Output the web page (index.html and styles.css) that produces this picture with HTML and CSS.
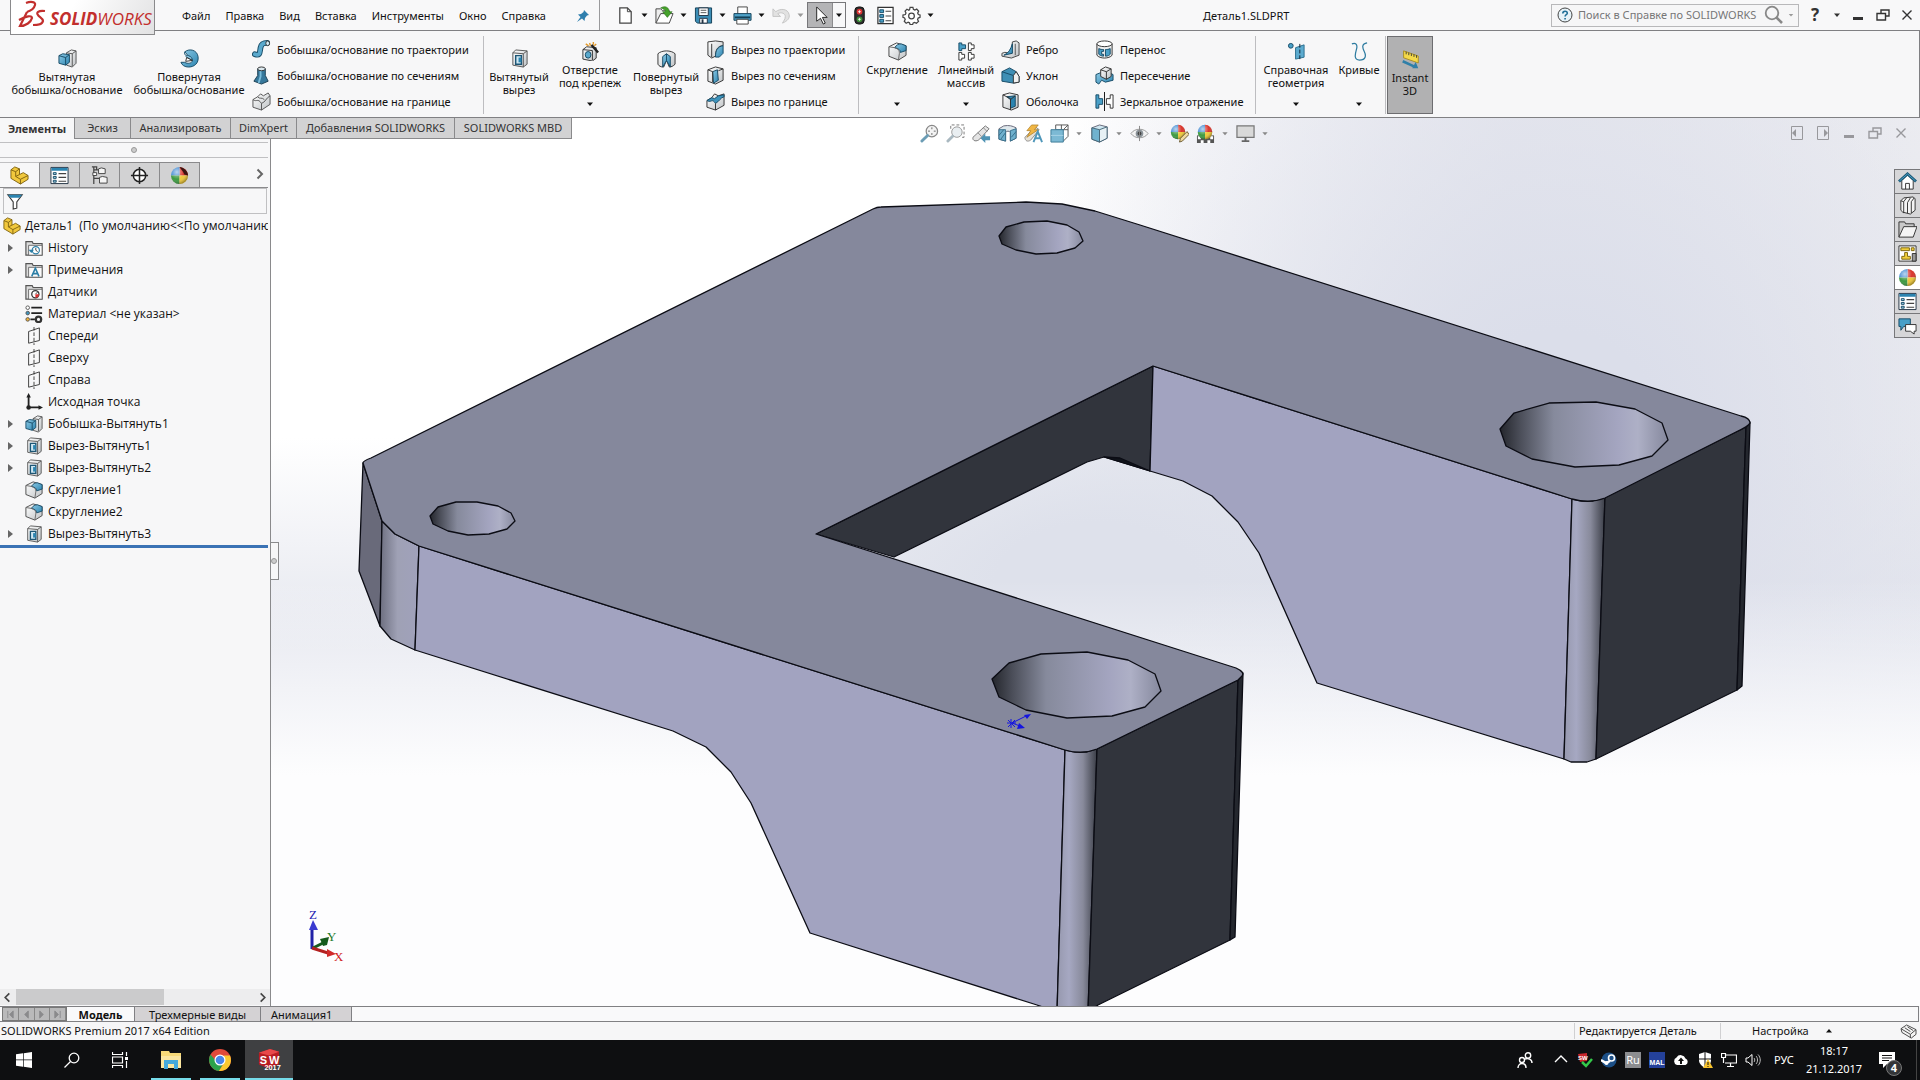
FILE: index.html
```html
<!DOCTYPE html>
<html lang="ru">
<head>
<meta charset="utf-8">
<title>Деталь1.SLDPRT</title>
<link rel="stylesheet" href="styles.css">
</head>
<body>
<svg class="sprite" aria-hidden="true">
  <defs>
    <linearGradient id="blue" x1="0" y1="0" x2="1" y2="1"><stop offset="0" stop-color="#8fcbe6"/><stop offset="1" stop-color="#2b84b0"/></linearGradient>
    <linearGradient id="grey" x1="0" y1="0" x2="1" y2="1"><stop offset="0" stop-color="#fff"/><stop offset="1" stop-color="#bfc3c6"/></linearGradient>
    <radialGradient id="shine" cx=".35" cy=".3" r=".7"><stop offset="0" stop-color="#fff" stop-opacity=".65"/><stop offset=".6" stop-color="#fff" stop-opacity="0"/><stop offset="1" stop-color="#000" stop-opacity=".3"/></radialGradient>
  </defs>
  <symbol id="caret" viewBox="0 0 8 8"><path d="M1 2.500h6L4 6z" fill="currentColor"/></symbol>
  <symbol id="boss" viewBox="0 0 20 20"><path d="M9 4l5-3 5 1v13l-4 4-6-2z" fill="url(#grey)" stroke="#555"/><path d="M15 5v13M15 5l4-3M15 5L9 4" stroke="#555" fill="none"/><path d="M1 7l4-2 7 1v8l-4 3-7-2z" fill="url(#blue)" stroke="#174b66"/><path d="M1 7l7 2 4-3M8 9v8" fill="none" stroke="#174b66"/></symbol>
  <symbol id="revolve" viewBox="0 0 20 20"><path d="M5 3c5-4 13-2 14 5s-4 11-10 11c-4 0-7-2-8-5h4c3 2 8 1 8-2z" fill="url(#blue)" stroke="#174b66"/><path d="M5 3c-1 3 1 4 4 4 3 1 4 3 4 5L6 8" fill="#8fcbe6" stroke="#174b66"/><path d="M7 9l6 3-7 1z" fill="#fff" stroke="#333"/></symbol>
  <symbol id="sweep" viewBox="0 0 20 20"><path d="M3 15c6 2 5-2 6-7 1-5 4-5 7-5" fill="none" stroke="#174b66" stroke-width="6" stroke-linecap="round"/><path d="M3 15c6 2 5-2 6-7 1-5 4-5 7-5" fill="none" stroke="#5aa9cd" stroke-width="4" stroke-linecap="round"/><ellipse cx="16.500" cy="3.500" rx="2" ry="2.500" fill="#d5ecf6" stroke="#333"/></symbol>
  <symbol id="loft" viewBox="0 0 20 20"><path d="M6 3v7l-4 6 8 3 7-3-3-6V3z" fill="#37789b" stroke="#1c3f52"/><path d="M9 4v7l-2 7" stroke="#79bbd9" stroke-width="2" fill="none"/><ellipse cx="10" cy="3" rx="4" ry="2" fill="#dbe8ee" stroke="#333"/></symbol>
  <symbol id="boundary" viewBox="0 0 20 20"><path d="M1 8l5-3 3-3 3 2 5-3 2 3v9l-9 6-9-3z" fill="url(#grey)" stroke="#555"/><path d="M1 8c4 3 5-2 9 4v7M10 12c4-1 5-6 9-8M6 5c2 3 4 0 7 3" fill="none" stroke="#555"/></symbol>
  <symbol id="cut" viewBox="0 0 20 20"><path d="M3 4l3-3 12 1v14l-4 3-11-2z" fill="url(#grey)" stroke="#555"/><path d="M3 4l11 1v14M14 5l4-3" fill="none" stroke="#555"/><path d="M6 7h6v9H6z" fill="#cfe7f2" stroke="#1d5675" stroke-width="1.500"/><path d="M9 9h3v5H9z" fill="#2b84b0"/></symbol>
  <symbol id="wizard" viewBox="0 0 20 20"><path d="M2 8l4-3 10 1v11l-4 3-10-2z" fill="url(#grey)" stroke="#333"/><path d="M2 8l10 1v10" fill="none" stroke="#333"/><ellipse cx="7.500" cy="13.500" rx="3" ry="3.500" fill="#5aa9cd" stroke="#174b66"/><path d="M11 3l7 8" stroke="#222" stroke-width="2.500"/><path d="M9 1l1 3M13 0v3M5 2l3 2M16 2l-2 2" stroke="#e29a2b" stroke-width="1.500"/></symbol>
  <symbol id="revcut" viewBox="0 0 20 20"><path d="M1 5c4-4 14-4 18 0v11c-2 2-4 3-6 3l-3-7-3 7c-3 0-5-1-6-3z" fill="url(#grey)" stroke="#333"/><path d="M10 5l4 3v11l-4-7-4 7V8z" fill="url(#blue)" stroke="#174b66"/><path d="M10 5v7" stroke="#174b66"/></symbol>
  <symbol id="sweepcut" viewBox="0 0 20 20"><path d="M2 2l8-1 8 1v4c-6 0-8 5-8 11l-4 2-4-3z" fill="url(#grey)" stroke="#333"/><path d="M18 6v8l-4 4h-4c0-7 2-11 8-12z" fill="url(#blue)" stroke="#174b66"/><path d="M6 4v14" stroke="#333"/></symbol>
  <symbol id="loftcut" viewBox="0 0 20 20"><path d="M2 4l8-3 8 2v12l-8 4-8-3z" fill="url(#grey)" stroke="#333"/><path d="M7 6l5-2 1 11-5 3z" fill="url(#blue)" stroke="#174b66"/><path d="M2 4l5 2v11M13 5l5-2" fill="none" stroke="#333"/></symbol>
  <symbol id="boundcut" viewBox="0 0 20 20"><path d="M1 9l5-3 3-4 4 2 6-2v12l-9 5-9-3z" fill="url(#grey)" stroke="#333"/><path d="M1 9c5 3 5-3 9 3 4-2 5-6 9-7V3l-6 1-4 3-3-1z" fill="#3d93bc" stroke="#174b66"/><path d="M10 12v7" stroke="#333"/></symbol>
  <symbol id="fillet" viewBox="0 0 20 20"><path d="M1 5l8-4 10 3v10l-8 5-10-4z" fill="url(#grey)" stroke="#444"/><path d="M7 6c2-3 4-4 7-4l5 2v5l-6 2c0-3-2-4-6-5z" fill="url(#blue)" stroke="#174b66"/><path d="M1 5l6 1c4 1 5 3 5 6l-1 7" fill="none" stroke="#666"/></symbol>
  <symbol id="pattern" viewBox="0 0 20 20"><path d="M2 1h3v2h4v4H5v2H2z" fill="#49a0c8" stroke="#174b66"/><path d="M12 1h3v2h3v4h-3v2h-3zM2 11h3v2h3v4H5v2H2zM12 11h3v2h3v4h-3v2h-3z" fill="#fff" stroke="#333"/></symbol>
  <symbol id="rib" viewBox="0 0 20 20"><path d="M12 2l4-1 3 2v13l-8 3-10-2v-3l3-1 7 1z" fill="url(#grey)" stroke="#444"/><path d="M12 4v10l-9 2c5-2 7-6 9-12z" fill="url(#blue)" stroke="#174b66"/><path d="M15 4v12" stroke="#555"/></symbol>
  <symbol id="draft" viewBox="0 0 20 20"><path d="M1 6l8-4 7 4 3 5v6l-6 1-12-2z" fill="#3f8fb5" stroke="#174b66"/><path d="M13 18V10l3-4 3 5v6z" fill="#f1f1f1" stroke="#333"/><path d="M1 6l12 4" stroke="#174b66"/></symbol>
  <symbol id="shell" viewBox="0 0 20 20"><path d="M2 3l7-2 9 2v13l-7 3-9-3z" fill="url(#grey)" stroke="#333"/><path d="M6 5l9-1v11l-5 2V8z" fill="#2b84b0" stroke="#174b66"/><path d="M2 3l8 4v12M15 4L10 8" stroke="#333" fill="none"/></symbol>
  <symbol id="wrap" viewBox="0 0 20 20"><path d="M2 4v12c3 4 13 4 16 0V4" fill="#eee" stroke="#333"/><ellipse cx="10" cy="4" rx="8" ry="3" fill="#fff" stroke="#333"/><path d="M4 9c2 1 3 1 5 1v2H7v3h2v2c-2 0-4-1-5-2zM16 9c-2 1-3 1-5 1v7c3 0 4-1 5-2z" fill="#49a0c8" stroke="#174b66"/></symbol>
  <symbol id="intersect" viewBox="0 0 20 20"><path d="M1 9l5-2 3 4 8-3 2 1v6l-8 2-4-2-3 4-3-2z" fill="url(#blue)" stroke="#174b66"/><path d="M6 4l5-3 6 2v8l-5 3-6-3z" fill="url(#grey)" stroke="#333"/><path d="M6 4l6 2 5-3M12 6v8" fill="none" stroke="#333"/></symbol>
  <symbol id="mirror" viewBox="0 0 20 20"><path d="M1 3h3v4h4v6H4v4H1z" fill="#49a0c8" stroke="#174b66"/><path d="M10 0v20" stroke="#111"/><path d="M19 3h-3v4h-4v6h4v4h3z" fill="#fff" stroke="#333"/></symbol>
  <symbol id="refgeo" viewBox="0 0 20 20"><circle cx="4" cy="4" r="2.500" fill="#49a0c8" stroke="#174b66"/><path d="M9 6l9-3v13l-9 2z" fill="#5cabcf" stroke="#2b6f8f"/><path d="M13.500 2v18" stroke="#123" stroke-dasharray="4 2"/></symbol>
  <symbol id="curves" viewBox="0 0 20 20"><path d="M2 2c4-2 6 1 5 5s-4 12 3 12 7-5 5-9-3-8 3-9" fill="none" stroke="#2d7ba0" stroke-width="1.300"/></symbol>
  <symbol id="instant" viewBox="0 0 20 22"><path d="M2 1l17 6v8L2 9z" fill="#f4d94a" stroke="#a68a1a"/><path d="M5 2v3M8 3v3M11 4v3M14 5v3M17 6v3" stroke="#333"/><path d="M1 13l13 6" stroke="#2f7fa8" stroke-width="3"/><path d="M12 21l7 0-3-7z" fill="#2f7fa8"/></symbol>

  <symbol id="new" viewBox="0 0 20 20"><path d="M4 2h8l4 4v12H4z" fill="#fff" stroke="#444" stroke-width="1.300"/><path d="M12 2v4h4" fill="none" stroke="#444"/></symbol>
  <symbol id="open" viewBox="0 0 20 20"><path d="M1 18V3h5l2 2h7v3" fill="#eee" stroke="#444"/><path d="M1 18L6 8h13l-4 10z" fill="#fff" stroke="#444"/><path d="M6 2c5-3 9 0 9 4h3l-5 6-5-6h3c0-2-2-3-5-4z" fill="#46a22c" stroke="#2c6d1c" stroke-width=".6"/></symbol>
  <symbol id="save" viewBox="0 0 20 20"><path d="M1.500 2h17v16h-15l-2-2z" fill="#3c8db5" stroke="#123f57"/><path d="M5 2h10v8H5zM6 13h8v5H6z" fill="#fff" stroke="#234"/><path d="M7 4.500h6M7 7h6" stroke="#555"/><path d="M8 14h2v4H8z" fill="#234"/></symbol>
  <symbol id="print" viewBox="0 0 20 20"><path d="M5 8V1h10v7" fill="#fff" stroke="#444"/><path d="M1 8h18v7H1z" fill="#4fa2c8" stroke="#123f57"/><path d="M2 12h16" stroke="#123f57" stroke-width="2"/><path d="M4 14h12v5H4z" fill="#fff" stroke="#444"/></symbol>
  <symbol id="undo" viewBox="0 0 20 20"><path d="M1 3v8h8L6 8c4-2 8 0 8 3s-2 5-3 7c5-2 8-5 7-9C17 3 9 2 4 6z" fill="#e2e2e2" stroke="#c4c4c4"/></symbol>
  <symbol id="pointer" viewBox="0 0 20 20"><path d="M6 1v15l4-3 3 6 2-1-3-6h5z" fill="#fff" stroke="#222"/></symbol>
  <symbol id="traffic" viewBox="0 0 20 20"><rect x="5" y="1" width="10" height="18" rx="4" fill="#2d2d2d" stroke="#111"/><circle cx="10" cy="6" r="3" fill="#d33"/><circle cx="10" cy="14" r="3" fill="#3f8f3a"/><path d="M8.500 6h3M10 4.500v3M8.500 14h3M10 12.500v3" stroke="#fff" stroke-width=".8"/></symbol>
  <symbol id="options" viewBox="0 0 20 20"><path d="M2 1.500h16v17H2z" fill="#fff" stroke="#333" stroke-width="1.300"/><path d="M4 4h4v3H4zM4 9h4v3H4zM4 14h4v3H4z" fill="#49a0c8" stroke="#174b66"/><path d="M10 5.500h6M10 10.500h6M10 15.500h6" stroke="#444" stroke-width="1.200"/></symbol>
  <symbol id="gear" viewBox="0 0 20 20"><path d="M8.500 1.500h3l.5 2 1.500.8 2-1 2 2.200-1 2 .7 1.500 1.800.5v2.500l-2 .7-.6 1.500 1 2-2.200 2-2-1-1.400.6-.6 1.700h-2.700l-.6-1.800-1.500-.6-2 1-2-2 1-2-.7-1.500-1.700-.6V9.500L3.500 9l.7-1.600-1-2 2-2 2 1 .8-.6z" fill="#fff" stroke="#444" stroke-width="1.300"/><circle cx="10" cy="10.500" r="3" fill="#fff" stroke="#444" stroke-width="1.300"/></symbol>
  <symbol id="pin" viewBox="0 0 14 14"><path d="M8 1l5 5-2 .5-2 2.500-.5 3L6 9.500 1 13l3.500-5L2 5.500 5 5l2.500-2z" fill="#2f7fae"/></symbol>

  <symbol id="zoomfit" viewBox="0 0 20 20"><circle cx="12.500" cy="7.500" r="6" fill="#f3f3f3" stroke="#888" stroke-width="1.300"/><path d="M12.500 3.500v8M8.500 7.500h8" stroke="#666" stroke-dasharray="2 4 2"/><path d="M8 12l-6 6" stroke="#6c9db5" stroke-width="3" stroke-linecap="round"/></symbol>
  <symbol id="zoomarea" viewBox="0 0 20 20"><path d="M5 5V1h14v13h-3" fill="none" stroke="#777" stroke-dasharray="3 2"/><circle cx="11.500" cy="8.500" r="5.500" fill="#e9eef1" stroke="#999"/><path d="M7 13l-5 5" stroke="#a9b8c0" stroke-width="3" stroke-linecap="round"/></symbol>
  <symbol id="prevview" viewBox="0 0 20 20"><path d="M1 14L14 2l4 3-10 11c-3 3-8 2-7-2z" fill="#e4e4e4" stroke="#777"/><path d="M12 4l4 4M6 9l4 4" stroke="#8a8a8a"/><path d="M9 15l5-5v3h5v4h-5v3z" fill="#4f93b4"/></symbol>
  <symbol id="section" viewBox="0 0 20 20"><path d="M1 5l5-3c6-1 9 0 13 2v11l-6 3V9c-1-2-4-2-5 0v9l-7-2z" fill="#dfe8ec" stroke="#667"/><path d="M1 6h7v12l-7-2zM13 7l6-2v10l-6 3z" fill="#6fb0cd" stroke="#36708c"/><path d="M1 12l5-6M3 16l5-7M14 14l5-6" stroke="#36708c"/></symbol>
  <symbol id="dynview" viewBox="0 0 20 20"><path d="M1 14L12 3l4 3-9 11c-3 2-6 1-6-3z" fill="#e8e2d6" stroke="#8a8a8a"/><path d="M8 1h7l-4 5h4L3 14l4-7H3z" fill="#f0b645" stroke="#a9781e" stroke-width=".7"/><path d="M10 19l4.500-11L19 19M12 15h5" fill="none" stroke="#4f97ba" stroke-width="2"/></symbol>
  <symbol id="orient" viewBox="0 0 20 20"><path d="M6 1h13v12l-5 5M6 1v5M12 1v12M6 6h13M19 1l-5 5" fill="none" stroke="#555"/><path d="M1 6h13v13H1z" fill="#7cb9d4" stroke="#3c7a97"/><path d="M1 12h13" stroke="#a8d4e6"/></symbol>
  <symbol id="display" viewBox="0 0 20 20"><path d="M2 4l8-3 8 2v12l-8 4-8-3z" fill="#cfe7f1" stroke="#667"/><path d="M2 4l8 2v13l-8-3z" fill="#70b2ce" stroke="#467"/><path d="M10 6l8-3v12l-8 4z" fill="#e7f1f5" stroke="#467"/></symbol>
  <symbol id="eye" viewBox="0 0 20 20"><path d="M1 10c4-6 14-6 18 0-4 6-14 6-18 0z" fill="#f3f3f3" stroke="#999"/><circle cx="10" cy="10" r="4" fill="#8a9298"/><circle cx="10" cy="10" r="2" fill="#444"/><path d="M10 2v16" stroke="#888"/></symbol>
  <symbol id="ball" viewBox="0 0 20 20"><path d="M10 10V1a9 9 0 0 1 9 9z" fill="#d9342b"/><path d="M10 10V1a9 9 0 0 0-9 9z" fill="#3a86d1"/><path d="M10 10H1a9 9 0 0 0 9 9z" fill="#3d9a42"/><path d="M10 10v9a9 9 0 0 0 9-9z" fill="#f0c93a"/><circle cx="10" cy="10" r="9" fill="url(#shine)"/></symbol>
  <symbol id="ballcut" viewBox="0 0 20 20"><use href="#ball"/><path d="M10 1c4 0 9 4 9 9l-4-1c-1-3-3-5-5-8z" fill="#3b1512"/></symbol>
  <symbol id="appear" viewBox="0 0 20 20"><use href="#ball" width="17" height="17"/><path d="M10 19l1-4 7-7 2 3-7 7z" fill="#f0d9a0" stroke="#6a5a30"/></symbol>
  <symbol id="sceneic" viewBox="0 0 20 20"><path d="M1 12h18v8H1z" fill="#555"/><path d="M2 13h3v3H2zM5 17h3v3H5zM12 17h3v3h-3zM15 13h3v3h-3z" fill="#fff"/><use href="#ball" x="1" width="17" height="17"/></symbol>
  <symbol id="monitor" viewBox="0 0 20 20"><path d="M1 2h18v12H1z" fill="#d9d9d9" stroke="#777" stroke-width="1.300"/><path d="M10 14v4M6 18h8" stroke="#666" stroke-width="2"/></symbol>

  <symbol id="min" viewBox="0 0 14 14"><path d="M2 9h10v3H2z" fill="currentColor"/></symbol>
  <symbol id="restore" viewBox="0 0 14 14"><path d="M5 5V2h8v6H10M1 5.500h8.500V12H1z" fill="none" stroke="currentColor" stroke-width="1.400"/></symbol>
  <symbol id="close" viewBox="0 0 14 14"><path d="M2.500 2.500l9 9M11.500 2.500l-9 9" stroke="currentColor" stroke-width="1.400"/></symbol>
  <symbol id="dockl" viewBox="0 0 14 14"><path d="M1.500.5h11v13h-11z" fill="none" stroke="currentColor"/><path d="M2 7l4-4v8z" fill="currentColor"/></symbol>
  <symbol id="dockr" viewBox="0 0 14 14"><path d="M1.500.5h11v13h-11z" fill="none" stroke="currentColor"/><path d="M12 7L8 3v8z" fill="currentColor"/></symbol>

  <symbol id="home" viewBox="0 0 20 20"><path d="M4 9v9h12V9l-6-6z" fill="#fff" stroke="#333"/><path d="M1 10l9-8 9 8" fill="none" stroke="#1c5875" stroke-width="3"/><path d="M1.500 9.500L10 2l8.500 7.500" fill="none" stroke="#4aa3ca"/><path d="M8 18v-6h4v6" fill="none" stroke="#333"/></symbol>
  <symbol id="library" viewBox="0 0 20 20"><path d="M3 5l3-3 10-1 2 2v12l-5 4-8-2-2-2z" fill="#f4f4f4" stroke="#333"/><path d="M3 5l3 1v12M6 6l3-4M10 7v11M10 7l3-5M14 6v12M14 6l3-4" stroke="#333" fill="none"/></symbol>
  <symbol id="folder" viewBox="0 0 20 20"><path d="M1 18V2h6l1 2h9v3" fill="#c9c9c9" stroke="#333"/><path d="M1 18l5-11h14l-4 11z" fill="#f4f4f4" stroke="#333"/></symbol>
  <symbol id="palette" viewBox="0 0 20 20"><path d="M1 2h18v16H1z" fill="#fff" stroke="#333"/><path d="M3 4h9v3H3zM14 4h3v3h-3zM7 9h3v4h3v3H4v-3h3z" fill="#f2cf3a" stroke="#7b6510"/><path d="M15 10h4v8h-4z" fill="#999" stroke="#333"/></symbol>
  <symbol id="props" viewBox="0 0 20 20"><path d="M1 1.500h18v17H1z" fill="#fff" stroke="#234"/><path d="M1.500 2h17v3h-17z" fill="#2b84b0"/><path d="M3.500 7h3v2h-3zM3.500 11h3v2h-3zM3.500 15h3v2h-3z" fill="#9fd2e8" stroke="#174b66"/><path d="M9 8h8M9 12h8M9 16h8" stroke="#444" stroke-width="1.200"/></symbol>
  <symbol id="forum" viewBox="0 0 20 20"><path d="M1 3h12v8H6l-3 4v-4H1z" fill="#49a0c8" stroke="#174b66"/><path d="M8 9h11v7h-2v3l-4-3H8z" fill="#fff" stroke="#333"/></symbol>

  <symbol id="part" viewBox="0 0 20 20"><path d="M1 4l4-3 5 2v6l4-2 5 3v4l-8 5-10-6z" fill="#f1c83d" stroke="#7f6310"/><path d="M1 4l5 2v5l5 3v5M6 6l4-3M6 11l4-2M11 14l8-4" fill="none" stroke="#7f6310"/></symbol>
  <symbol id="config" viewBox="0 0 20 20"><path d="M4 1v18M4 4h5M4 13h6M2 1h5v3" fill="none" stroke="#444" stroke-width="1.300"/><path d="M9 3l3-1 4 1v5H9zM10 12l3-1 5 1v6h-8z" fill="#f5f5f5" stroke="#444"/><path d="M3 7h4v3H3z" fill="#fff" stroke="#444"/></symbol>
  <symbol id="target" viewBox="0 0 20 20"><circle cx="10" cy="10" r="6.500" fill="#fff" stroke="#222" stroke-width="1.600"/><path d="M10 1v18M1 10h18" stroke="#222" stroke-width="1.600"/></symbol>
  <symbol id="filter" viewBox="0 0 20 20"><path d="M2 3h16l-6 8v7l-4 1v-8z" fill="#fff" stroke="#333" stroke-width="1.200"/><path d="M2 3h16l-3 3.500H5z" fill="#2b84b0"/></symbol>
  <symbol id="fold" viewBox="0 0 20 20"><path d="M1 18V3h7l1 2h10v13z" fill="#dcdcdc" stroke="#555" stroke-width="1.300"/><path d="M4 7h15v11H4z" fill="#fafafa" stroke="#666"/></symbol>
  <symbol id="history" viewBox="0 0 20 20"><use href="#fold"/><circle cx="12" cy="12.500" r="4" fill="#fff" stroke="#2b7ea6" stroke-width="1.300"/><path d="M12 10v2.500l2 1.500" fill="none" stroke="#333"/><path d="M4 12h6l-3 3.500z" fill="#2b7ea6"/></symbol>
  <symbol id="notes" viewBox="0 0 20 20"><use href="#fold"/><path d="M7.500 17L11.500 8l4 9M9 14h5" fill="none" stroke="#2b7ea6" stroke-width="1.800"/></symbol>
  <symbol id="sensor" viewBox="0 0 20 20"><use href="#fold"/><circle cx="11.500" cy="12.500" r="4" fill="#fff" stroke="#333" stroke-width="1.400"/><path d="M11.500 12.500l3-3" stroke="#333"/><path d="M11.500 16.500a4 4 0 0 0 4-4h-4z" fill="#d33"/></symbol>
  <symbol id="material" viewBox="0 0 20 20"><circle cx="3" cy="3" r="2" fill="#fff" stroke="#555"/><circle cx="3" cy="9" r="2" fill="#3d93bc" stroke="#555"/><circle cx="3" cy="16" r="2" fill="#f0b33a" stroke="#555"/><path d="M7 3h12M7 9h12M6 16h5" stroke="#222" stroke-width="2"/><circle cx="15" cy="16" r="3" fill="none" stroke="#333" stroke-width="2.500"/></symbol>
  <symbol id="plane" viewBox="0 0 20 20"><path d="M4 5l12-4v14L4 18z" fill="none" stroke="#333"/><path d="M10 0v20" stroke="#333" stroke-dasharray="4 2"/></symbol>
  <symbol id="origin" viewBox="0 0 20 20"><path d="M4 16V3M4 16h13" stroke="#222" stroke-width="2"/><path d="M4 0l2.500 5h-5zM20 16l-5-2.500v5z" fill="#222"/><circle cx="4" cy="16" r="2.500" fill="#222"/></symbol>
  <symbol id="fly" viewBox="0 0 6 8"><path d="M0 0l5 4-5 4z" fill="#666"/></symbol>

  <linearGradient id="gHole" x1="0" x2="1"><stop offset="0" stop-color="#24262c"/><stop offset=".12" stop-color="#4b4e59"/><stop offset=".32" stop-color="#868a9c"/><stop offset=".7" stop-color="#a4a5c0"/><stop offset=".82" stop-color="#aeb0c6"/><stop offset="1" stop-color="#85889d"/></linearGradient>
  <linearGradient id="gEdge" x1="0" x2="1"><stop offset="0" stop-color="#9698ae"/><stop offset=".3" stop-color="#a6a8c2"/><stop offset=".65" stop-color="#888a9b"/><stop offset="1" stop-color="#3a3d46"/></linearGradient>
  <linearGradient id="gEdgeL" x1="0" x2="1"><stop offset="0" stop-color="#6d6f80"/><stop offset=".45" stop-color="#9fa1b5"/><stop offset="1" stop-color="#a0a1bb"/></linearGradient>
</svg>

<header class="titlebar">
  <div class="logo" aria-label="SOLIDWORKS">
    <svg viewBox="0 0 36 34" aria-hidden="true"><path d="M14 3c5-2 10-1 9 2-1 4-5 6-8 7M15 12L8 26c6 0 11-4 12-8 0-3-6-2-13 2M33 11c-7-1-9 2-7 4 1 2 5 3 5 6-1 4-6 4-10 4" fill="none" stroke="#c22f2d" stroke-width="2.200"/></svg>
    <span><b>SOLID</b>WORKS</span>
  </div>
  <nav class="menu">
    <a href="#">Файл</a><a href="#">Правка</a><a href="#">Вид</a><a href="#">Вставка</a><a href="#">Инструменты</a><a href="#">Окно</a><a href="#">Справка</a>
    <svg class="i14"><use href="#pin"/></svg>
  </nav>
  <div class="quick">
    <button aria-label="Создать"><svg><use href="#new"/></svg></button><svg class="car"><use href="#caret"/></svg>
    <button aria-label="Открыть"><svg><use href="#open"/></svg></button><svg class="car"><use href="#caret"/></svg>
    <button aria-label="Сохранить"><svg><use href="#save"/></svg></button><svg class="car"><use href="#caret"/></svg>
    <button aria-label="Печать"><svg><use href="#print"/></svg></button><svg class="car"><use href="#caret"/></svg>
    <button aria-label="Отменить"><svg><use href="#undo"/></svg></button><svg class="car dim"><use href="#caret"/></svg>
    <div class="select"><button aria-label="Выбрать"><svg><use href="#pointer"/></svg></button><svg class="selcar"><use href="#caret"/></svg></div>
    <button class="wide" aria-label="Перестроить"><svg><use href="#traffic"/></svg></button>
    <button class="wide" aria-label="Свойства"><svg><use href="#options"/></svg></button>
    <button class="wide" aria-label="Параметры"><svg><use href="#gear"/></svg></button><svg class="car near"><use href="#caret"/></svg>
  </div>
  <div class="doc">Деталь1.SLDPRT</div>
  <div class="search">
    <svg viewBox="0 0 16 16" class="i16"><circle cx="8" cy="8" r="7" fill="#e6f2f8" stroke="#444"/><path d="M5.800 6.500c0-3 4.500-3 4.500-.3 0 1.500-2.200 1.600-2.200 3.300M8.100 11v1.500" fill="none" stroke="#1f6f98" stroke-width="1.600"/></svg>
    <input type="text" aria-label="Поиск" placeholder="Поиск в Справке по SOLIDWORKS">
    <svg viewBox="0 0 20 20" class="i20"><circle cx="8" cy="8" r="6.300" fill="none" stroke="#888" stroke-width="1.800"/><path d="M12.500 12.500l5.500 5.500" stroke="#888" stroke-width="2.600"/></svg>
    <svg class="c8 dim"><use href="#caret"/></svg>
  </div>
  <div class="wincontrols">
    <button class="help" aria-label="Справка">?</button><svg class="c8"><use href="#caret"/></svg>
    <button aria-label="Свернуть"><svg><use href="#min"/></svg></button>
    <button aria-label="Восстановить"><svg><use href="#restore"/></svg></button>
    <button aria-label="Закрыть"><svg><use href="#close"/></svg></button>
  </div>
</header>

<section class="ribbon">
  <div class="group first">
    <button class="big w122"><svg><use href="#boss"/></svg><span>Вытянутая<br>бобышка/основание</span></button>
    <button class="big w122"><svg><use href="#revolve"/></svg><span>Повернутая<br>бобышка/основание</span></button>
    <div class="col w232">
      <button><svg><use href="#sweep"/></svg>Бобышка/основание по траектории</button>
      <button><svg><use href="#loft"/></svg>Бобышка/основание по сечениям</button>
      <button><svg><use href="#boundary"/></svg>Бобышка/основание на границе</button>
    </div>
  </div>
  <div class="group">
    <button class="big w66"><svg><use href="#cut"/></svg><span>Вытянутый<br>вырез</span></button>
    <button class="big drop w76"><svg><use href="#wizard"/></svg><span>Отверстие<br>под крепеж</span><svg class="c8"><use href="#caret"/></svg></button>
    <button class="big w76"><svg><use href="#revcut"/></svg><span>Повернутый<br>вырез</span></button>
    <div class="col w154">
      <button><svg><use href="#sweepcut"/></svg>Вырез по траектории</button>
      <button><svg><use href="#loftcut"/></svg>Вырез по сечениям</button>
      <button><svg><use href="#boundcut"/></svg>Вырез по границе</button>
    </div>
  </div>
  <div class="group">
    <button class="big drop w72"><svg><use href="#fillet"/></svg><span>Скругление</span><svg class="c8"><use href="#caret"/></svg></button>
    <button class="big drop w66"><svg><use href="#pattern"/></svg><span>Линейный<br>массив</span><svg class="c8"><use href="#caret"/></svg></button>
    <div class="col w94">
      <button><svg><use href="#rib"/></svg>Ребро</button>
      <button><svg><use href="#draft"/></svg>Уклон</button>
      <button><svg><use href="#shell"/></svg>Оболочка</button>
    </div>
    <div class="col w162">
      <button><svg><use href="#wrap"/></svg>Перенос</button>
      <button><svg><use href="#intersect"/></svg>Пересечение</button>
      <button><svg><use href="#mirror"/></svg>Зеркальное отражение</button>
    </div>
  </div>
  <div class="group">
    <button class="big drop w76"><svg><use href="#refgeo"/></svg><span>Справочная<br>геометрия</span><svg class="c8"><use href="#caret"/></svg></button>
    <button class="big drop w50"><svg><use href="#curves"/></svg><span>Кривые</span><svg class="c8"><use href="#caret"/></svg></button>
  </div>
  <button class="big pressed"><svg><use href="#instant"/></svg><span>Instant<br>3D</span></button>
</section>

<main class="work">
  <nav class="tabs">
    <button class="on">Элементы</button><button class="w56">Эскиз</button><button class="w100">Анализировать</button><button class="w66">DimXpert</button><button class="w158">Добавления SOLIDWORKS</button><button class="w116">SOLIDWORKS MBD</button>
  </nav>

  <aside class="panel">
    <div class="grip"><i></i></div>
    <div class="ptabs">
      <button class="on" aria-label="Дерево"><svg><use href="#part"/></svg></button><button aria-label="Свойства"><svg><use href="#props"/></svg></button><button aria-label="Конфигурации"><svg><use href="#config"/></svg></button><button aria-label="DimXpert"><svg><use href="#target"/></svg></button><button aria-label="Отображение"><svg><use href="#ballcut"/></svg></button>
      <svg class="chev" viewBox="0 0 8 12"><path d="M1.500 1.500L6 6l-4.500 4.500" fill="none" stroke="#666" stroke-width="2"/></svg>
    </div>
    <label class="filter"><svg><use href="#filter"/></svg><input type="text" aria-label="Фильтр"></label>
    <ul class="tree">
      <li class="root"><svg><use href="#part"/></svg>Деталь1&nbsp; (По умолчанию&lt;&lt;По умолчанию&gt;</li>
      <li><svg class="fly"><use href="#fly"/></svg><svg><use href="#history"/></svg>History</li>
      <li><svg class="fly"><use href="#fly"/></svg><svg><use href="#notes"/></svg>Примечания</li>
      <li><svg><use href="#sensor"/></svg>Датчики</li>
      <li><svg><use href="#material"/></svg>Материал &lt;не указан&gt;</li>
      <li><svg><use href="#plane"/></svg>Спереди</li>
      <li><svg><use href="#plane"/></svg>Сверху</li>
      <li><svg><use href="#plane"/></svg>Справа</li>
      <li><svg><use href="#origin"/></svg>Исходная точка</li>
      <li><svg class="fly"><use href="#fly"/></svg><svg><use href="#boss"/></svg>Бобышка-Вытянуть1</li>
      <li><svg class="fly"><use href="#fly"/></svg><svg><use href="#cut"/></svg>Вырез-Вытянуть1</li>
      <li><svg class="fly"><use href="#fly"/></svg><svg><use href="#cut"/></svg>Вырез-Вытянуть2</li>
      <li><svg><use href="#fillet"/></svg>Скругление1</li>
      <li><svg><use href="#fillet"/></svg>Скругление2</li>
      <li><svg class="fly"><use href="#fly"/></svg><svg><use href="#cut"/></svg>Вырез-Вытянуть3</li>
    </ul>
    <div class="hscroll">
      <svg viewBox="0 0 8 12"><path d="M6 1.500L1.500 6 6 10.500" fill="none" stroke="#444" stroke-width="1.800"/></svg><div class="track"><i></i></div><svg viewBox="0 0 8 12"><path d="M2 1.500L6.500 6 2 10.500" fill="none" stroke="#444" stroke-width="1.800"/></svg>
    </div>
  </aside>

  <section class="viewport">
    <svg class="scene" viewBox="271 118 1649 888" preserveAspectRatio="xMidYMid slice" role="img" aria-label="Деталь">
      <g stroke="#0b0c14" stroke-width="1.300" stroke-linejoin="round">
        <path fill="#696a7a" d="M363 463L382 521L380 626L359 571z"/>
        <path fill="url(#gEdgeL)" d="M382 521L395 534L419 546L415 650L391 639L380 626z"/>
        <path fill="#a2a3c0" d="M419 546L1065 750L1057 1012L1037 1005L810 933L751 803L731 772L706 747L673 731L415 650z"/>
        <path fill="#31343c" d="M816 534L1153 366L1150 471L1104 457L1087 462L894 557z"/>
        <path fill="#10131a" d="M1104 457L1120 458L1150 471z"/>
        <path fill="#a2a3c0" d="M1153 366L1572 499L1564 759L1317 683L1259 553L1238 522L1212 496L1183 481L1150 471z"/>
        <path fill="url(#gEdge)" d="M1572 499L1582 501H1593L1605 497L1596 759L1587 762H1571L1564 759z"/>
        <path fill="#31343c" d="M1605 497L1746 427L1737 690L1596 759z"/>
        <path fill="#24272e" d="M1746 427L1750 422L1742 686L1737 690z"/>
        <path fill="url(#gEdge)" d="M1065 750L1075 752H1087L1097 749L1088 1012H1057z"/>
        <path fill="#31343c" d="M1097 749L1238 680L1230 940L1098 1005L1088 1012z"/>
        <path fill="#24272e" d="M1238 680L1243 673L1235 937L1230 940z"/>
        <path fill="#85889c" d="M881 207L1026 202L1062 204L1095 211L1140 225L1741 416Q1750 418 1750 423Q1749 426 1736 432L1605 498Q1590 504 1572 499L1153 366L816 534L1236 668Q1245 672 1242 676L1238 680L1097 749Q1082 755 1065 750L419 546L395 534L382 521L363 463Q363 461 371 458L873 209Q877 207 881 207z"/>
        <path fill="url(#gHole)" d="M999 236L1006 227L1024 222L1047 221L1067 225L1079 232L1083 241L1075 248L1057 253L1036 254L1016 250L1002 244z"/>
        <path fill="url(#gHole)" d="M430 516L438 507L456 502H477L498 506L511 513L515 521L507 529L489 534L468 535L448 531L433 524z"/>
        <path fill="url(#gHole)" d="M1500 429L1514 413L1549 403L1596 402L1635 409L1662 423L1668 440L1652 456L1619 465L1575 467L1532 459L1506 446z"/>
        <path fill="url(#gHole)" d="M992 679L1009 663L1041 654L1087 652L1128 660L1155 674L1161 691L1145 707L1112 716L1067 718L1026 710L999 697z"/>
      </g>
      <g stroke="#1414e0" fill="#1414e0"><path d="M1007 723h9M1011 719v9M1008 720l7 7M1015 720l-7 7M1012 723l14-7M1012 723l8 3"/><path d="M1031 714l-7 1 3 4zM1025 728l-8 1 2-6z" stroke="none"/></g>
      <g>
        <path d="M312 949v-20" stroke="#2222a8" stroke-width="3"/><path d="M313 920l5 10h-9z" fill="#3a3ad0"/>
        <path d="M313 948l12-6" stroke="#155a1c" stroke-width="3"/><path d="M320 939l9-2-2 8-4 1z" fill="#155a1c"/>
        <path d="M312 948l16 5" stroke="#b32020" stroke-width="3"/><path d="M327 949l9 5-9 3z" fill="#d02a2a"/>
        <text class="axis" x="309" y="919" fill="#2222b0">Z</text><text class="axis" x="327" y="941" fill="#1c7a28">Y</text><text class="axis" x="334" y="961" fill="#d02222">X</text>
      </g>
    </svg>
    <div class="vhead">
      <span></span>
      <div class="headsup">
        <button aria-label="В размер экрана"><svg><use href="#zoomfit"/></svg></button><button aria-label="Увеличить область"><svg><use href="#zoomarea"/></svg></button><button aria-label="Предыдущий вид"><svg><use href="#prevview"/></svg></button><button aria-label="Разрез"><svg><use href="#section"/></svg></button><button aria-label="Виды примечаний"><svg><use href="#dynview"/></svg></button><button aria-label="Ориентация"><svg><use href="#orient"/></svg></button><svg class="hc"><use href="#caret"/></svg>
        <button aria-label="Стиль отображения"><svg><use href="#display"/></svg></button><svg class="hc"><use href="#caret"/></svg>
        <button aria-label="Скрыть"><svg><use href="#eye"/></svg></button><svg class="hc"><use href="#caret"/></svg>
        <button aria-label="Внешний вид"><svg><use href="#appear"/></svg></button><button aria-label="Сцена"><svg><use href="#sceneic"/></svg></button><svg class="hc"><use href="#caret"/></svg>
        <button aria-label="Параметры вида"><svg><use href="#monitor"/></svg></button><svg class="hc"><use href="#caret"/></svg>
      </div>
      <div class="vctl">
        <button aria-label="Слева"><svg><use href="#dockl"/></svg></button><button aria-label="Справа"><svg><use href="#dockr"/></svg></button><button aria-label="Свернуть"><svg><use href="#min"/></svg></button><button aria-label="Восстановить"><svg><use href="#restore"/></svg></button><button aria-label="Закрыть"><svg><use href="#close"/></svg></button>
      </div>
    </div>
    <nav class="side">
      <button aria-label="Ресурсы"><svg><use href="#home"/></svg></button><button aria-label="Библиотека"><svg><use href="#library"/></svg></button><button aria-label="Проводник"><svg><use href="#folder"/></svg></button><button aria-label="Палитра видов"><svg><use href="#palette"/></svg></button><button class="on" aria-label="Внешние виды"><svg><use href="#ball"/></svg></button><button aria-label="Свойства"><svg><use href="#props"/></svg></button><button aria-label="Форум"><svg><use href="#forum"/></svg></button>
    </nav>
    <button class="handle" aria-label="Скрыть дерево"><i></i></button>
  </section>
</main>

<nav class="sheets">
  <div class="rec"><button aria-label="Первый"><svg viewBox="0 0 10 10"><path d="M2 1v8M8 1L4 5l4 4z"/></svg></button><button aria-label="Назад"><svg viewBox="0 0 10 10"><path d="M7 1L3 5l4 4z"/></svg></button><button aria-label="Вперед"><svg viewBox="0 0 10 10"><path d="M3 1l4 4-4 4z"/></svg></button><button aria-label="Последний"><svg viewBox="0 0 10 10"><path d="M8 1v8M2 1l4 4-4 4z"/></svg></button></div>
  <button class="sheet on">Модель</button><button class="sheet w126">Трехмерные виды</button><button class="sheet last">Анимация1</button>
</nav>

<footer class="status">
  <span class="edition">SOLIDWORKS Premium 2017 x64 Edition</span>
  <span class="cell edit">Редактируется Деталь</span>
  <span class="cell setup">Настройка <svg class="c8"><use href="#caret"/></svg></span>
  <svg class="tag" viewBox="0 0 18 16"><path d="M1 5l6-4 10 5v5l-5 4L2 9z" fill="#f4f4f4" stroke="#444"/><path d="M1 5l10 6 6-5M11 11v4M5 4l6 4M8 3l6 4" fill="none" stroke="#444"/></svg>
</footer>

<div class="taskbar">
  <div class="apps">
    <button aria-label="Пуск"><svg viewBox="0 0 16 16"><path d="M0 2.300L7 1.300V7.600H0zM7.700 1.200L16 0v7.600H7.700zM0 8.300h7v6.400l-7-1zM7.700 8.300H16V16l-8.300-1.200z" fill="#fff"/></svg></button>
    <button aria-label="Поиск"><svg viewBox="0 0 16 16"><circle cx="10" cy="6" r="4.800" fill="none" stroke="#fff" stroke-width="1.300"/><path d="M6.500 9.500L.5 15.500" stroke="#fff" stroke-width="1.300"/></svg></button>
    <button aria-label="Представление задач"><svg viewBox="0 0 16 16"><path d="M.5 0v2.500h10V0M.5 16v-2.500h10V16M.5 5h10v6H.5zM14.500 0v4M14.500 9v7" fill="none" stroke="#fff" stroke-width="1.200"/><path d="M13 5h3v3h-3z" fill="#fff"/></svg></button>
    <button class="run lead" aria-label="Проводник"><svg class="l" viewBox="0 0 22 20"><path d="M1 1h8l1 2h11v15H1z" fill="#f7d978"/><path d="M1 6h20v12H1z" fill="#fbe6a0"/><path d="M4 19v-9h14v9h-4v-5H8v5z" fill="#45a9dc"/></svg></button>
    <button class="run" aria-label="Chrome"><svg class="l" viewBox="0 0 22 22"><circle cx="11" cy="11" r="11" fill="#e04a3a"/><path d="M1.500 5.500A11 11 0 0 0 10 22l5-8.500-4-2.500-4 1z" fill="#2ba24c"/><path d="M21 6.500A11 11 0 0 1 10 22l5-8V6.500z" fill="#fbc92f"/><circle cx="11" cy="11" r="5.500" fill="#fff"/><circle cx="11" cy="11" r="4.300" fill="#4a86e8"/></svg></button>
    <button class="run act" aria-label="SOLIDWORKS 2017"><svg class="l" viewBox="0 0 24 24"><path d="M1 4l12-4 10 3v14l-12 4-10-4z" fill="#b81d22"/><path d="M1 4l12-4 10 3-11 4z" fill="#e8494a"/><text class="swt" x="2" y="16">S</text><text class="swt" x="12" y="16">W</text><text class="swy" x="7" y="23">2017</text></svg></button>
  </div>
  <div class="tray">
    <svg class="people" viewBox="0 0 16 16"><circle cx="5" cy="8" r="2.500"/><path d="M1 16c0-6 8-6 8 0"/><circle cx="11" cy="3.500" r="2.700"/><path d="M8 7c3-1 7 0 7 4"/></svg>
    <svg class="t" viewBox="0 0 16 16"><path d="M2 10l6-6 6 6" fill="none" stroke="#fff" stroke-width="1.400"/></svg>
    <svg class="t" viewBox="0 0 16 16"><path d="M1 2l9-1v8l-7 1z" fill="#c8252b"/><text class="mini" x="1" y="8">SW</text><path d="M5 10l4 4 6-7" fill="none" stroke="#35c94a" stroke-width="2.500"/></svg>
    <svg class="t" viewBox="0 0 16 16"><circle cx="8" cy="8" r="7.500" fill="#1c4f86"/><circle cx="10.500" cy="6" r="3" fill="none" stroke="#fff" stroke-width="1.600"/><path d="M0 8l5 3 4-2" fill="none" stroke="#fff" stroke-width="2.500"/><circle cx="5.500" cy="11" r="2" fill="#fff"/></svg>
    <span class="ru">Ru</span>
    <span class="mal">MAL</span>
    <svg class="t" viewBox="0 0 16 16"><path d="M4 13a4 4 0 0 1-.5-7.500 5 5 0 0 1 9 1A3.500 3.500 0 0 1 12.500 13z" fill="#fff"/><path d="M8 5.500L5 9h2v3h2V9h2z" fill="#111"/></svg>
    <svg class="t" viewBox="0 0 16 16"><path d="M8 0l6 2v6c0 4-3 6-6 8-3-2-6-4-6-8V2z" fill="#fff"/><path d="M8 0v15M2 7h12" stroke="#111"/><path d="M11 7l5 9H6z" fill="#f6c22d"/><path d="M11 10v3M11 14v1" stroke="#111"/></svg>
    <svg class="t" viewBox="0 0 16 16"><path d="M4 3h11.500v8H4M9.500 11v3M6 14.500h7M.5 1.500h4v4h-4zM2.500 6v5" fill="none" stroke="#fff" stroke-width="1.200"/></svg>
    <svg class="t" viewBox="0 0 16 16"><path d="M1 6h2l4-3.500v11L3 10H1z" fill="none" stroke="#fff"/><path d="M9 6c1 1 1 3 0 4M11 4c2 2 2 6 0 8M13 2.500c3 3 3 8 0 11" fill="none" stroke="#bbb"/></svg>
    <span class="lang">РУС</span>
    <time class="clock"><span>18:17</span><span>21.12.2017</span></time>
    <div class="notif"><svg viewBox="0 0 16 16"><path d="M0 0h16v12H8l-4 4v-4H0z" fill="#fff"/><path d="M3 3.500h10M3 6h10M3 8.500h7" stroke="#111"/></svg><b>4</b></div>
  </div>
</div>
</body>
</html>
```

FILE: styles.css
```css
* { box-sizing: border-box; }
html, body { height: 100%; margin: 0; }
body {
  display: flex; flex-direction: column; min-height: 100vh; overflow: hidden;
  font: 12px/16px "Noto Sans", "Open Sans", sans-serif; color: #111; background: #f7f7f8;
}
button { font: inherit; color: inherit; border: 0; padding: 0; margin: 0; background: none; white-space: nowrap; }
input { font: inherit; border: 0; padding: 0; background: none; min-width: 0; outline: 0; }
a { color: inherit; text-decoration: none; }
ul { list-style: none; margin: 0; padding: 0; }
svg { display: block; flex: none; }
.sprite { position: absolute; width: 0; height: 0; }
.c8 { width: 8px; height: 8px; }
.dim { color: #999; }

/* title bar */
.titlebar { display: flex; height: 31px; border-bottom: 1px solid #808083; background: #f8f8f9; flex: none; align-items: center; position: relative; z-index: 3; }
.logo { width: 145px; height: 35px; margin-left: 10px; align-self: flex-start; display: flex; align-items: center; border: 1px solid #8a8a8c; border-top: 0; background: linear-gradient(120deg, #fff 40%, #e2e2e3); color: #c22f2d; flex: none; font: italic 17px/24px "Open Sans", sans-serif; gap: 2px; padding-left: 1px; }
.logo svg { width: 36px; height: 34px; }
.logo span { padding-top: 4px; }
.menu { display: flex; gap: 15px; margin-left: 27px; width: 418px; flex: none; align-items: center; border-right: 1px solid #9a9a9c; height: 30px; font-size: 11px; padding-top: 1px; }
.menu .i14 { width: 14px; height: 14px; margin-left: auto; margin-right: 9px; }
.quick { display: flex; align-items: center; margin-left: 15px; flex: none; }
.quick button { width: 20px; height: 24px; display: grid; place-items: center; }
.quick button svg { width: 19px; height: 19px; }
.quick .car { width: 19px; height: 8px; }
.quick .near { width: 13px; }
.quick .wide { width: 26px; }
.select { display: flex; align-items: center; border: 1px solid #77777a; height: 26px; margin-left: -3px; }
.quick .select button { width: 25px; background: #b4b4b6; border-right: 1px solid #8c8c8e; }
.selcar { width: 12px; height: 8px; }
.doc { flex: 1; padding: 1px 0 0 266px; font-size: 11px; white-space: nowrap; }
.search { display: flex; align-items: center; width: 248px; height: 23px; border: 1px solid #b8b8ba; padding: 0 4px 0 5px; flex: none; background: #f6f6f7; }
.search input { flex: 1; margin-left: 5px; font-size: 11px; }
.search input::placeholder { color: #777; opacity: 1; }
.i16 { width: 16px; height: 16px; }
.i20 { width: 20px; height: 20px; margin: 0 4px; }
.search .c8 { width: 6px; }
.wincontrols { display: flex; align-items: center; margin-left: 9px; width: 112px; justify-content: space-between; padding-right: 6px; flex: none; color: #333; }
.wincontrols button { width: 14px; }
.wincontrols button svg { width: 14px; height: 14px; }
.wincontrols .help { font-weight: 700; font-size: 17px; }

/* ribbon */
.ribbon { display: flex; flex: none; height: 87px; padding: 5px 0 3px; border-bottom: 1px solid #808083; border-right: 1px solid #808083; background: #f7f7f8; font-size: 11px; line-height: 13px; }
.group { display: flex; border-right: 1px solid #bdbdc0; padding: 0 1px 0 2px; }
.first { padding-left: 6px; }
.big { display: flex; flex-direction: column; align-items: center; padding-top: 13px; gap: 2px; flex: none; }
.big > svg:first-child { width: 19px; height: 19px; }
.drop { padding-top: 6px; }
.drop .c8 { margin-top: auto; margin-bottom: 6px; }
.pressed { width: 46px; margin-left: 1px; background: #b1b1b2; border: 1px solid #6d6d70; }
.col { display: flex; flex-direction: column; flex: none; padding-left: 2px; }
.col button { display: flex; align-items: center; gap: 6px; height: 26px; }
.col svg { width: 19px; height: 19px; }
.w50 { width: 50px; } .w56 { width: 56px; } .w66 { width: 66px; } .w72 { width: 72px; } .w76 { width: 76px; }
.w94 { width: 94px; } .w100 { width: 100px; } .w116 { width: 117px; } .w122 { width: 122px; }
.w126 { width: 126px; } .w154 { width: 153px; } .w158 { width: 158px; } .w162 { width: 161px; } .w232 { width: 232px; }

/* work area: tab strip overlaps the viewport column */
.work { flex: 1; min-height: 0; display: grid; grid-template: 21px minmax(0, 1fr) / 271px minmax(0, 1fr); background: #fff; }
.tabs { grid-area: 1 / 1 / 2 / 3; justify-self: start; display: flex; z-index: 2; }
.tabs button { background: #d2d2d3; border: 1px solid #8a8a8c; border-width: 0 1px 1px 0; color: #333; font-size: 11px; }
.tabs .on { background: #f7f7f8; width: 75px; font-weight: 700; border-bottom: 0; }
.panel { grid-area: 2 / 1; display: flex; flex-direction: column; background: #f7f7f8; border-right: 1px solid #8a8a8c; min-height: 0; overflow: hidden; }
.grip { height: 16px; margin: 3px 2px 0 0; border: 1px solid #c0c0c2; border-width: 1px 0; display: grid; place-items: center; flex: none; }
.grip i, .handle i { width: 6px; height: 6px; border-radius: 50%; background: #ccc; border: 1px solid #999; }
.ptabs { display: flex; margin: 4px 2px 0 0; height: 26px; border-bottom: 1px solid #8a8a8c; align-items: stretch; flex: none; }
.ptabs button { width: 40px; display: grid; place-items: center; background: #d2d2d3; border: 1px solid #8a8a8c; border-width: 1px 1px 0 0; }
.ptabs .on { background: #f7f7f8; border-top-color: #c0c0c2; }
.ptabs button svg { width: 19px; height: 19px; }
.chev { width: 8px; height: 12px; margin: 6px 4px 0 auto; }
.filter { height: 26px; margin: 0 3px; border: 1px solid #c0c0c2; display: flex; align-items: center; padding-left: 2px; flex: none; }
.filter svg { width: 18px; height: 20px; }
.tree { margin: 0 2px 0 0; padding-top: 1px; border-bottom: 3px solid #3b73b5; overflow: hidden; flex: none; white-space: nowrap; font-family: "Open Sans", "Noto Sans", sans-serif; }
.tree li { display: flex; align-items: center; height: 22px; padding-left: 25px; gap: 5px; }
.tree li svg { width: 18px; height: 18px; }
.tree .root { padding-left: 3px; gap: 4px; }
.tree li .fly { width: 6px; height: 8px; margin: 0 6px 0 -17px; }
.hscroll { display: flex; align-items: center; height: 16px; margin: auto 0 1px; padding: 0 3px; background: #ededee; flex: none; gap: 4px; }
.hscroll svg { width: 9px; height: 11px; }
.track { flex: 1; }
.track i { display: block; height: 16px; width: 62%; background: #cbcbcc; }

.viewport {
  grid-area: 1 / 2 / 3 / 3; position: relative; display: grid; grid-template: 30px 21px auto minmax(0, 1fr) / minmax(0, 1fr); overflow: hidden;
  background:
    linear-gradient(to bottom, rgba(253,253,254,0) 52%, #fdfdfe 74%),
    radial-gradient(ellipse 30% 32% at 50% 52%, #dee1eb 20%, rgba(226,228,238,0)),
    radial-gradient(ellipse 34% 70% at 78% 38%, #dbdeea 20%, rgba(225,227,237,0)),
    linear-gradient(to bottom, rgba(232,233,240,0) 36%, #e4e6ee 60%),
    linear-gradient(to right, #fff 47%, #ebebf0 75%, #efeff2);
}
.scene { grid-area: 1 / 1 / 5 / 2; width: 100%; height: 100%; }
.axis { font: 13px "Liberation Serif", serif; }
.vhead { grid-area: 1 / 1; display: grid; grid-template-columns: 1fr auto 1fr; align-items: center; z-index: 1; padding-right: 3px; }
.headsup { display: flex; align-items: center; color: #888; }
.headsup button { width: 26px; height: 26px; display: grid; place-items: center; }
.headsup button svg { width: 19px; height: 19px; }
.hc { width: 14px; height: 7px; }
.vctl { justify-self: end; display: flex; gap: 12px; padding-right: 9px; color: #98989c; }
.vctl svg { width: 14px; height: 14px; }
.side { grid-area: 3 / 1; justify-self: end; width: 26px; display: flex; flex-direction: column; border: 1px solid #77777a; border-right: 0; z-index: 1; }
.side button { height: 24px; display: grid; place-items: center; background: #d6d6d8; border-bottom: 1px solid #77777a; }
.side button:last-child { border-bottom: 0; height: 23px; }
.side .on { background: #fff; }
.side svg { width: 19px; height: 19px; }
.handle { position: absolute; left: -1px; top: calc(50% - 20px); width: 9px; height: 38px; background: #f7f7f8; border: 1px solid #8a8a8c; border-left: 0; display: grid; place-items: center; z-index: 1; }

/* sheet tabs and status */
.sheets { display: flex; flex: none; height: 16px; border: 1px solid #808083; border-width: 1px 1px 1px 0; background: #f9f9fa; line-height: 13px; padding-left: 2px; margin-right: 1px; }
.rec { display: flex; border: 1px solid #777; width: 65px; background: #b9b9ba; }
.rec button { flex: 1; display: grid; place-items: center; border-right: 1px solid #888; }
.rec svg { width: 9px; height: 9px; fill: #8a8a8c; stroke: #8a8a8c; }
.sheet { background: #d4d2d4; border-right: 1px solid #808083; font-size: 11px; }
.sheet.on { background: #f9f9fa; font-weight: 700; width: 68px; }
.sheet.last { width: 91px; padding-left: 10px; text-align: left; }
.status { display: flex; flex: none; height: 18px; background: #f6f6f7; align-items: center; padding: 0 3px 0 1px; font-size: 11px; line-height: 16px; }
.edition { flex: 1; }
.cell { border-left: 1px solid #d0d0d2; height: 16px; white-space: nowrap; }
.edit { width: 146px; padding-left: 4px; }
.setup { width: 180px; padding-left: 31px; display: flex; align-items: center; gap: 16px; }
.setup svg { transform: rotate(180deg); }
.tag { width: 17px; height: 15px; }

/* taskbar */
.taskbar { display: flex; flex: none; justify-content: space-between; height: 40px; background: #0e0f11; color: #fff; }
.apps { display: flex; }
.apps button { width: 48px; height: 40px; display: grid; place-items: center; }
.apps svg { width: 16px; height: 16px; }
.apps .l { width: 22px; height: 22px; overflow: visible; }
.apps .run { width: 49px; background: linear-gradient(#76dcea, #76dcea) center bottom / 40px 2px no-repeat; }
.apps .lead { margin-left: 2px; }
.apps .run.act { background: linear-gradient(#76dcea, #76dcea) center bottom / 100% 2px no-repeat #3f4042; width: 48px; margin-left: 1px; }
.swt { font: 700 12px "Liberation Sans", sans-serif; fill: #fff; }
.swy { font: 700 8px "Liberation Sans", sans-serif; fill: #fff; }
.tray { display: flex; align-items: center; }
.people { width: 16px; height: 16px; fill: none; stroke: #fff; stroke-width: 1.4px; margin-right: 20px; }
.t { width: 16px; height: 16px; margin-right: 8px; }
.mini { font: 700 6px "Liberation Sans", sans-serif; fill: #fff; }
.ru, .mal { width: 16px; height: 16px; margin-right: 8px; background: #8c8d90; text-align: center; line-height: 16px; font-size: 11px; }
.mal { background: #24419a; font: 700 7px/22px "Liberation Sans", sans-serif; }
.lang { width: 30px; text-align: center; font-size: 11px; }
.clock { width: 70px; display: flex; flex-direction: column; text-align: center; line-height: 18px; font-size: 11px; }
.notif { display: flex; width: 48px; padding-left: 10px; position: relative; border-right: 1px solid #444; margin-right: 3px; height: 40px; align-items: center; }
.notif svg { width: 16px; height: 16px; }
.notif b { position: absolute; left: 17px; top: 20px; width: 16px; height: 16px; border-radius: 50%; background: #333538; border: 1px solid #777; font-size: 11px; line-height: 14px; text-align: center; }
```
